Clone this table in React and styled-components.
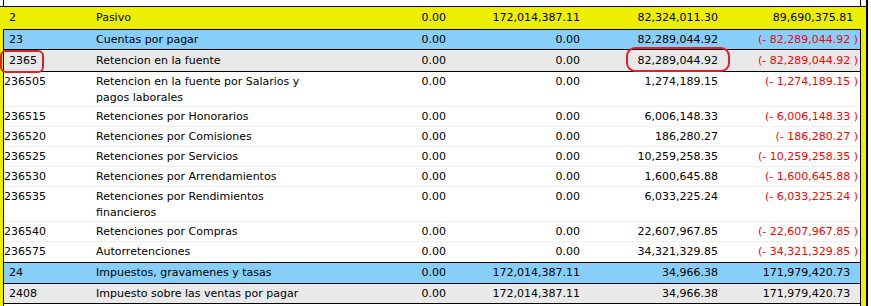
import styled, { createGlobalStyle } from "styled-components";

const Global = createGlobalStyle`
  html, body { margin: 0; padding: 0; background: #fff; }
  body {
    font-family: "DejaVu Sans", Verdana, sans-serif;
    font-size: 11px;
    color: #000;
  }
`;

const Frame = styled.div`
  position: relative;
  width: 868px;
  box-sizing: border-box;
  border-right: 2px solid #000;
  overflow: hidden;
`;

const Stub = styled.div`
  height: 6px;
  margin: 0 5px 0 3px;
  border-left: 1px solid #000;
  border-right: 1px solid #000;
`;

const Section = styled.div`
  background: #eeee00;
  border-top: 1px solid #000;
`;

const Children = styled.div`
  padding: 0 5px 0 3px;
`;

const Box = styled.div`
  border-top: 1px solid #000;
  border-left: ${(p) => (p.$edge ? "1px solid #000" : "none")};
  border-right: ${(p) => (p.$edge ? "1px solid #000" : "none")};
  background: #fff;
`;

const Row = styled.div`
  display: grid;
  grid-template-columns: ${(p) => 96 - p.$x}px 240px 110px 134px 138px 1fr;
  box-sizing: border-box;
  background: ${(p) => p.$bg || "#fff"};
  height: ${(p) => (p.$h ? `${p.$h}px` : "auto")};
  line-height: ${(p) => (p.$h ? `${p.$h}px` : "16px")};
  white-space: nowrap;
`;

const HeadRow = styled(Row)`
  border-bottom: ${(p) => (p.$line ? "1px solid #000" : "none")};
`;

const LeafRow = styled(Row)`
  min-height: 20px;
  padding-top: 2px;
  border-bottom: 1px solid #efefef;
  &:last-child { border-bottom: none; }
`;

const Code = styled.div`
  padding-left: ${(p) => p.$pad}px;
`;

const Name = styled.div`
  white-space: ${(p) => (p.$wrap ? "normal" : "nowrap")};
  padding-right: ${(p) => (p.$wrap ? "18px" : "0")};
`;

const Num = styled.div`
  text-align: right;
`;

const Last = styled.div`
  text-align: right;
  padding-right: ${(p) => p.$end}px;
  color: ${(p) => (p.$neg ? "#ff0000" : "#000")};
  white-space: pre;
`;

const Ghost = styled.span`
  visibility: hidden;
`;

const Filler = styled.div`
  height: 12px;
  background: #fff;
`;

const Ring = styled.div`
  position: absolute;
  box-sizing: border-box;
  border: 2px solid #e31e2b;
  border-radius: ${(p) => p.$r}px;
`;

function Amount({ value, end }) {
  if (value.startsWith("-")) {
    return <Last $neg $end={end}>{`(- ${value.slice(1)} )`}</Last>;
  }
  return (
    <Last $end={end}>
      {value}
      <Ghost>{" )"}</Ghost>
    </Last>
  );
}

function Cells({ v, end = 2 }) {
  return (
    <>
      <Num>{v[0]}</Num>
      <Num>{v[1]}</Num>
      <Num>{v[2]}</Num>
      <Amount value={v[3]} end={end} />
    </>
  );
}

const leaves = [
  ["236505", "Retencion en la fuente por Salarios y pagos laborales", ["0.00", "0.00", "1,274,189.15", "-1,274,189.15"]],
  ["236515", "Retenciones por Honorarios", ["0.00", "0.00", "6,006,148.33", "-6,006,148.33"]],
  ["236520", "Retenciones por Comisiones", ["0.00", "0.00", "186,280.27", "-186,280.27"]],
  ["236525", "Retenciones por Servicios", ["0.00", "0.00", "10,259,258.35", "-10,259,258.35"]],
  ["236530", "Retenciones por Arrendamientos", ["0.00", "0.00", "1,600,645.88", "-1,600,645.88"]],
  ["236535", "Retenciones por Rendimientos financieros", ["0.00", "0.00", "6,033,225.24", "-6,033,225.24"]],
  ["236540", "Retenciones por Compras", ["0.00", "0.00", "22,607,967.85", "-22,607,967.85"]],
  ["236575", "Autorretenciones", ["0.00", "0.00", "34,321,329.85", "-34,321,329.85"]],
];

export default function App() {
  return (
    <>
      <Global />
      <Frame>
        <Stub />
        <Section>
          <HeadRow $x={0} $h={22} $bg="#eeee00">
            <Code $pad={9}>2</Code>
            <Name>Pasivo</Name>
            <Cells v={["0.00", "172,014,387.11", "82,324,011.30", "89,690,375.81"]} end={5} />
          </HeadRow>
          <Children>
            <Box $edge>
              <HeadRow $x={4} $h={19} $bg="#87cefa">
                <Code $pad={5}>23</Code>
                <Name>Cuentas por pagar</Name>
                <Cells v={["0.00", "0.00", "82,289,044.92", "-82,289,044.92"]} />
              </HeadRow>
              <Box>
                <HeadRow $x={4} $h={22} $bg="#e9e9e9" $line>
                  <Code $pad={5}>2365</Code>
                  <Name>Retencion en la fuente</Name>
                  <Cells v={["0.00", "0.00", "82,289,044.92", "-82,289,044.92"]} />
                </HeadRow>
                {leaves.map(([code, name, v]) => (
                  <LeafRow key={code} $x={4}>
                    <Code $pad={0}>{code}</Code>
                    <Name $wrap>{name}</Name>
                    <Cells v={v} />
                  </LeafRow>
                ))}
              </Box>
            </Box>
            <Box $edge>
              <HeadRow $x={4} $h={20} $bg="#87cefa">
                <Code $pad={5}>24</Code>
                <Name>Impuestos, gravamenes y tasas</Name>
                <Cells v={["0.00", "172,014,387.11", "34,966.38", "171,979,420.73"]} />
              </HeadRow>
              <Box>
                <HeadRow $x={4} $h={20} $bg="#e9e9e9" $line>
                  <Code $pad={5}>2408</Code>
                  <Name>Impuesto sobre las ventas por pagar</Name>
                  <Cells v={["0.00", "172,014,387.11", "34,966.38", "171,979,420.73"]} />
                </HeadRow>
                <Filler />
              </Box>
            </Box>
          </Children>
        </Section>
        <Ring $r={6} style={{ left: 0, top: 50, width: 44, height: 23 }} />
        <Ring $r={9} style={{ left: 626, top: 47, width: 104, height: 25 }} />
      </Frame>
    </>
  );
}
